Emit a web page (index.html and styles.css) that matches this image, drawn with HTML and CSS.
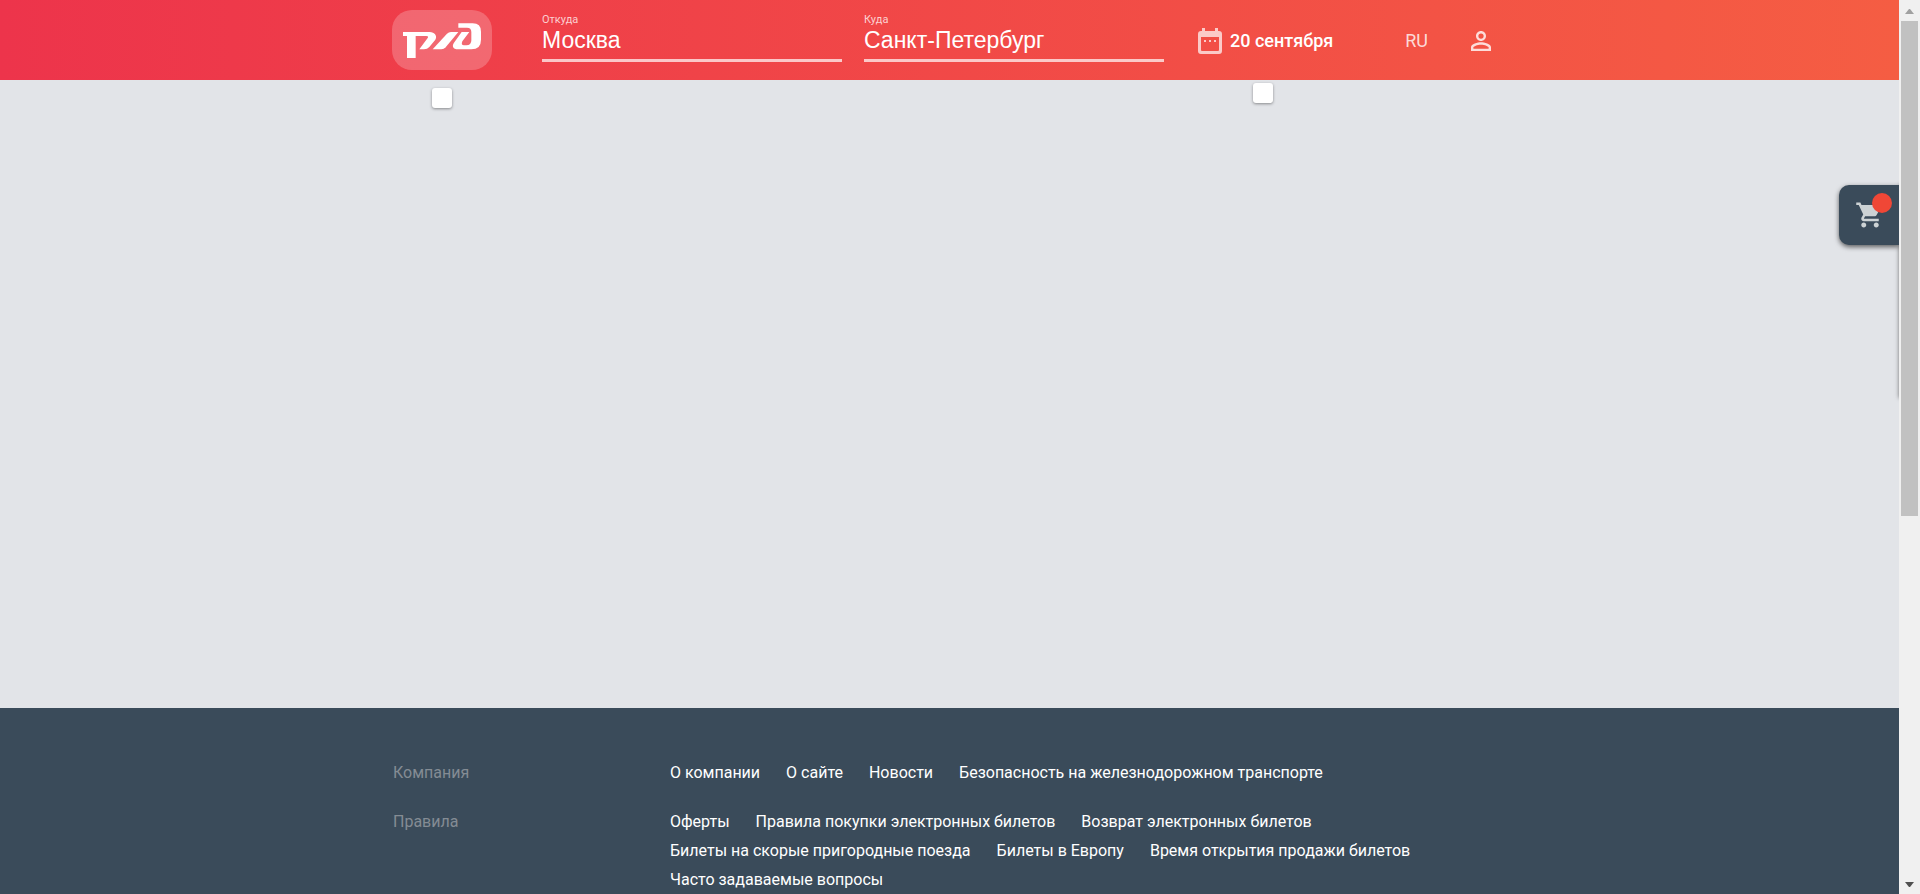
FILE: index.html
```html
<!DOCTYPE html>
<html lang="ru">
<head>
<meta charset="utf-8">
<title>РЖД</title>
<link rel="stylesheet" href="styles.css">
</head>
<body>
<div class="window">
  <div class="page">
    <header class="header">
      <form class="container header-row">
        <a class="logo" href="#" aria-label="РЖД">
          <svg viewBox="0 0 300 180" aria-hidden="true">
            <path fill-rule="evenodd" d="M33 66H113C128 66 137 78 130 89L112 111Q106 118 96 118H82L107 84Q111 78 103 78H71V144H45V78H33Z"/>
            <path d="M122 118L165 71Q170 66 177 66H199L161 112Q156 118 148 118Z"/>
            <path fill-rule="evenodd" d="M199 40H242Q267 40 267 65V89Q267 118 238 118H198C183 118 179 108 186 98L209 66H232L211 94Q206 106 216 106H223Q238 106 238 91V66Q238 53 225 53H199Z"/>
          </svg>
        </a>
        <div class="field">
          <label class="field-label" for="from">Откуда</label>
          <input class="field-input" id="from" type="text" value="Москва">
        </div>
        <div class="field">
          <label class="field-label" for="to">Куда</label>
          <input class="field-input" id="to" type="text" value="Санкт-Петербург">
        </div>
        <button class="date" type="button">
          <svg class="date-icon" viewBox="0 0 24 26" aria-hidden="true">
            <path fill-rule="evenodd" d="M4 0h3v3h10V0h3v3h1a3 3 0 0 1 3 3v17a3 3 0 0 1-3 3H3a3 3 0 0 1-3-3V6a3 3 0 0 1 3-3h1zM3 9v13q0 1 1 1h16q1 0 1-1V9zM6 12h2v2H6zM11 12h2v2h-2zM16 12h2v2h-2z"/>
          </svg>
          <span>20 сентября</span>
        </button>
        <button class="lang" type="button">RU</button>
        <button class="user" type="button" aria-label="Личный кабинет">
          <svg class="user-icon" viewBox="4 4 16 16" aria-hidden="true">
            <path d="M12 5.900a2.100 2.100 0 1 1 0 4.200 2.100 2.100 0 0 1 0-4.200m0 9c2.970 0 6.100 1.460 6.100 2.100v1.100H5.900V17c0-.640 3.130-2.100 6.100-2.100M12 4C9.790 4 8 5.790 8 8s1.790 4 4 4 4-1.790 4-4-1.790-4-4-4zm0 9c-2.670 0-8 1.340-8 4v3h16v-3c0-2.660-5.330-4-8-4z"/>
          </svg>
        </button>
        <span class="tip tip-logo"></span>
        <span class="tip tip-date"></span>
      </form>
    </header>
    <main class="main">
      <div class="cart-panel"></div>
      <button class="cart" type="button" aria-label="Корзина">
        <svg class="cart-icon" viewBox="0 0 24 24" aria-hidden="true">
          <path d="M7 18c-1.100 0-1.990.9-1.990 2S5.900 22 7 22s2-.9 2-2-.9-2-2-2zM1 2v2h2l3.600 7.590-1.350 2.450c-.160.280-.250.610-.250.960 0 1.100.9 2 2 2h12v-2H7.420c-.140 0-.250-.110-.250-.250l.030-.120.900-1.630h7.450c.750 0 1.410-.410 1.750-1.030l3.580-6.490A1 1 0 0 0 20 4H5.210l-.940-2H1zm16 16c-1.100 0-1.990.9-1.990 2s.890 2 1.990 2 2-.9 2-2-.9-2-2-2z"/>
        </svg>
        <span class="cart-badge"></span>
      </button>
    </main>
    <footer class="footer">
      <div class="container footer-rows">
        <div class="footer-row">
          <div class="footer-title">Компания</div>
          <nav class="footer-links" aria-label="Компания">
            <a href="#">О компании</a>
            <a href="#">О сайте</a>
            <a href="#">Новости</a>
            <a href="#">Безопасность на железнодорожном транспорте</a>
          </nav>
        </div>
        <div class="footer-row">
          <div class="footer-title">Правила</div>
          <nav class="footer-links" aria-label="Правила">
            <a href="#">Оферты</a>
            <a href="#">Правила покупки электронных билетов</a>
            <a href="#">Возврат электронных билетов</a>
            <a href="#">Билеты на скорые пригородные поезда</a>
            <a href="#">Билеты в Европу</a>
            <a href="#">Время открытия продажи билетов</a>
            <a href="#">Часто задаваемые вопросы</a>
          </nav>
        </div>
      </div>
    </footer>
  </div>
  <div class="scrollbar" aria-hidden="true">
    <svg class="arrow arrow-up" viewBox="0 0 9 5"><path d="M0 5L4 0h1l4 5z"/></svg>
    <div class="track"><div class="thumb"></div></div>
    <svg class="arrow arrow-down" viewBox="0 0 9 5"><path d="M0 0h9L5 5H4z"/></svg>
  </div>
</div>
</body>
</html>
```
FILE: styles.css
```css
* {
  box-sizing: border-box;
}

body {
  margin: 0;
  background: #e2e4e8;
  font-family: Roboto, "Liberation Sans", sans-serif;
  font-size: 16px;
}

button {
  padding: 0;
  border: 0;
  background: none;
  color: inherit;
  font: inherit;
}

svg {
  display: block;
}

.window {
  display: grid;
  grid-template-columns: 1fr 21px;
  height: 100vh;
  overflow: hidden;
}

.page {
  display: flex;
  flex-direction: column;
  min-width: 0;
  overflow: hidden;
}

.container {
  width: 100%;
  max-width: 1115px;
  margin: 0 auto;
}

/* Header */

.header {
  flex: none;
  background: linear-gradient(90deg, #ed344b, #f55d43);
  color: #fff;
}

.header-row {
  position: relative;
  display: flex;
  align-items: center;
  height: 80px;
}

.logo {
  flex: none;
  width: 100px;
  margin-right: 50px;
  border-radius: 20px;
  background: rgba(255, 255, 255, 0.22);
  fill: #fff;
}

.field {
  display: flex;
  flex-direction: column;
  width: 300px;
  height: 80px;
  margin-right: 22px;
  padding-top: 13px;
}

.field-label {
  font-size: 11px;
  line-height: 14px;
  color: rgba(255, 255, 255, 0.75);
}

.field-input {
  width: 100%;
  height: 35px;
  padding: 0 0 5px;
  border: 0;
  border-bottom: 3px solid rgba(255, 255, 255, 0.7);
  border-radius: 0;
  outline: 0;
  background: none;
  color: #fff;
  font-family: "Liberation Sans", Arial, sans-serif;
  font-size: 23px;
  line-height: 27px;
}

.date {
  display: flex;
  align-items: center;
  gap: 8px;
  margin-left: 12px;
  padding-top: 2px;
  font-size: 18px;
  font-weight: 500;
  line-height: 24px;
}

.date-icon {
  width: 24px;
  height: 26px;
  fill: rgba(255, 255, 255, 0.7);
}

.lang {
  margin-left: 72px;
  padding-top: 2px;
  font-size: 18px;
  line-height: 24px;
  color: rgba(255, 255, 255, 0.8);
}

.user {
  margin-left: 43px;
  padding-top: 2px;
}

.user-icon {
  width: 20px;
  height: 20px;
  fill: rgba(255, 255, 255, 0.8);
}

.tip {
  position: absolute;
  width: 20px;
  height: 20px;
  border-radius: 3px;
  background: #fff;
  box-shadow: 0 1px 3px rgba(0, 0, 0, 0.4);
}

.tip-logo {
  top: 88px;
  left: 40px;
}

.tip-date {
  top: 83px;
  left: 861px;
}

/* Main area with the cart tab */

.main {
  position: relative;
  flex: 1;
}

.cart {
  position: absolute;
  top: 105px;
  right: 0;
  width: 60px;
  height: 60px;
  padding: 15px 14px 15px 16px;
  border-radius: 10px 0 0 10px;
  background: #3a4b5a;
  box-shadow: 0 2px 5px rgba(0, 0, 0, 0.6);
}

.cart-icon {
  width: 30px;
  height: 30px;
  fill: #cdd3d5;
}

.cart-badge {
  position: absolute;
  top: 8px;
  right: 7px;
  width: 20px;
  height: 20px;
  border-radius: 50%;
  background: #f04736;
}

.cart-panel {
  position: absolute;
  top: 105px;
  left: 100%;
  width: 300px;
  height: 213px;
  box-shadow: 0 0 4px rgba(0, 0, 0, 0.5);
}

/* Footer */

.footer {
  flex: none;
  padding-top: 50px;
  background: #3a4b5a;
}

.footer-rows {
  display: flex;
  flex-direction: column;
  gap: 20px;
  padding-left: 1px;
}

.footer-row {
  display: grid;
  grid-template-columns: 277px 1fr;
  line-height: 29px;
}

.footer-title {
  color: #848c94;
}

.footer-links {
  display: flex;
  flex-wrap: wrap;
  column-gap: 26px;
  max-width: 780px;
}

.footer-links a {
  color: #fff;
  text-decoration: none;
}

/* Scrollbar */

.scrollbar {
  display: flex;
  flex-direction: column;
  align-items: center;
  padding: 9px 0 7px;
  background: #f0f0f0;
}

.arrow {
  width: 9px;
  height: 5px;
}

.arrow-up {
  fill: #a0a0a0;
}

.arrow-down {
  fill: #505050;
}

.track {
  flex: 1;
  width: 17px;
  padding: 7px 0;
}

.thumb {
  height: 58%;
  background: #c1c1c1;
}
```
